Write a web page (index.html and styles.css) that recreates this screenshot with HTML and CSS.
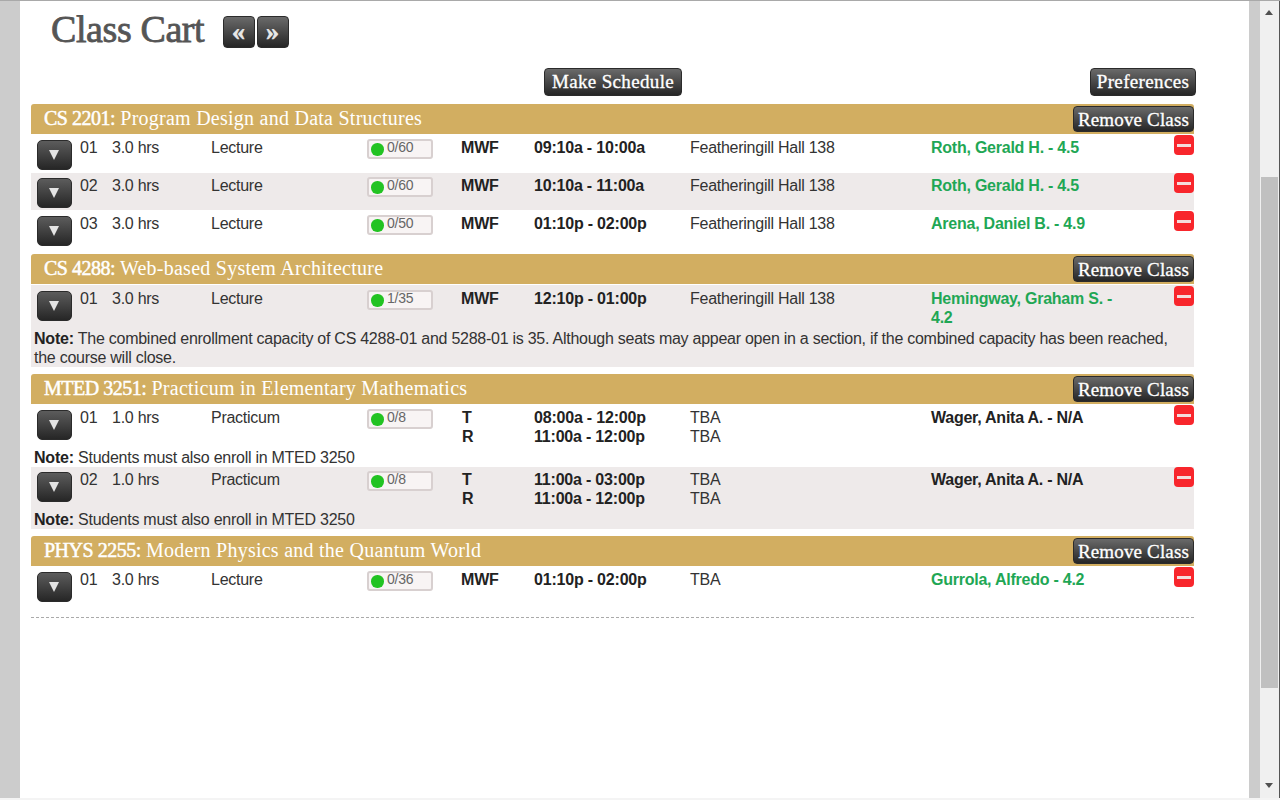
FILE: index.html
```html
<!DOCTYPE html>
<html lang="en">
	<head>
		<meta charset="UTF-8" />
		<title>Class Cart</title>
		<link rel="stylesheet" href="styles.css">
	</head>
	<body>
		<div class="page">
			<div class="gutter"></div>
			<main class="content">
				<div class="title-row">
					<h1>Class Cart</h1>
					<div class="pager">
						<button class="dark-btn pager-btn">«</button>
						<button class="dark-btn pager-btn">»</button>
					</div>
				</div>

				<div class="toolbar">
					<button class="dark-btn make-btn">Make Schedule</button>
					<button class="dark-btn prefs-btn">Preferences</button>
				</div>

				<!-- CS 2201 -->
				<section class="course">
					<div class="course-head">
						<h2><b>CS 2201:</b> Program Design and Data Structures</h2>
						<button class="dark-btn remove-btn">Remove Class</button>
					</div>
					<div class="row">
						<button class="dark-btn toggle"><span class="tri"></span></button>
						<div>01</div>
						<div>3.0 hrs</div>
						<div>Lecture</div>
						<div class="seats"><i></i>0/60</div>
						<div class="strong">MWF</div>
						<div class="strong">09:10a - 10:00a</div>
						<div>Featheringill Hall 138</div>
						<div class="prof rated">Roth, Gerald H. - 4.5</div>
						<button class="minus"><span></span></button>
					</div>
					<div class="row alt tight first-gap">
						<button class="dark-btn toggle"><span class="tri"></span></button>
						<div>02</div>
						<div>3.0 hrs</div>
						<div>Lecture</div>
						<div class="seats"><i></i>0/60</div>
						<div class="strong">MWF</div>
						<div class="strong">10:10a - 11:00a</div>
						<div>Featheringill Hall 138</div>
						<div class="prof rated">Roth, Gerald H. - 4.5</div>
						<button class="minus"><span></span></button>
					</div>
					<div class="row">
						<button class="dark-btn toggle"><span class="tri"></span></button>
						<div>03</div>
						<div>3.0 hrs</div>
						<div>Lecture</div>
						<div class="seats"><i></i>0/50</div>
						<div class="strong">MWF</div>
						<div class="strong">01:10p - 02:00p</div>
						<div>Featheringill Hall 138</div>
						<div class="prof rated">Arena, Daniel B. - 4.9</div>
						<button class="minus"><span></span></button>
					</div>
				</section>

				<!-- CS 4288 -->
				<section class="course">
					<div class="course-head">
						<h2><b>CS 4288:</b> Web-based System Architecture</h2>
						<button class="dark-btn remove-btn">Remove Class</button>
					</div>
					<div class="row alt first-gap">
						<button class="dark-btn toggle"><span class="tri"></span></button>
						<div>01</div>
						<div>3.0 hrs</div>
						<div>Lecture</div>
						<div class="seats"><i></i>1/35</div>
						<div class="strong">MWF</div>
						<div class="strong">12:10p - 01:00p</div>
						<div>Featheringill Hall 138</div>
						<div class="prof rated">Hemingway, Graham S. - 4.2</div>
						<button class="minus"><span></span></button>
						<p class="note"><b>Note:</b> The combined enrollment capacity of CS 4288-01 and 5288-01 is 35. Although seats may appear open in a section, if the combined capacity has been reached, the course will close.</p>
					</div>
				</section>

				<!-- MTED 3251 -->
				<section class="course">
					<div class="course-head">
						<h2><b>MTED 3251:</b> Practicum in Elementary Mathematics</h2>
						<button class="dark-btn remove-btn">Remove Class</button>
					</div>
					<div class="row">
						<button class="dark-btn toggle"><span class="tri"></span></button>
						<div>01</div>
						<div>1.0 hrs</div>
						<div>Practicum</div>
						<div class="seats"><i></i>0/8</div>
						<div class="strong days">T<br>R</div>
						<div class="strong">08:00a - 12:00p<br>11:00a - 12:00p</div>
						<div>TBA<br>TBA</div>
						<div class="prof">Wager, Anita A. - N/A</div>
						<button class="minus"><span></span></button>
						<p class="note"><b>Note:</b> Students must also enroll in MTED 3250</p>
					</div>
					<div class="row alt tight">
						<button class="dark-btn toggle"><span class="tri"></span></button>
						<div>02</div>
						<div>1.0 hrs</div>
						<div>Practicum</div>
						<div class="seats"><i></i>0/8</div>
						<div class="strong days">T<br>R</div>
						<div class="strong">11:00a - 03:00p<br>11:00a - 12:00p</div>
						<div>TBA<br>TBA</div>
						<div class="prof">Wager, Anita A. - N/A</div>
						<button class="minus"><span></span></button>
						<p class="note"><b>Note:</b> Students must also enroll in MTED 3250</p>
					</div>
				</section>

				<!-- PHYS 2255 -->
				<section class="course">
					<div class="course-head">
						<h2><b>PHYS 2255:</b> Modern Physics and the Quantum World</h2>
						<button class="dark-btn remove-btn">Remove Class</button>
					</div>
					<div class="row">
						<button class="dark-btn toggle"><span class="tri"></span></button>
						<div>01</div>
						<div>3.0 hrs</div>
						<div>Lecture</div>
						<div class="seats"><i></i>0/36</div>
						<div class="strong">MWF</div>
						<div class="strong">01:10p - 02:00p</div>
						<div>TBA</div>
						<div class="prof rated">Gurrola, Alfredo - 4.2</div>
						<button class="minus"><span></span></button>
					</div>
				</section>

				<hr class="end-rule">
			</main>
			<div class="gutter right"></div>
			<div class="scrollbar">
				<span class="arrow up"></span>
				<div class="thumb"></div>
				<span class="arrow down"></span>
			</div>
		</div>
	</body>
</html>
```

FILE: styles.css
```css
body {
	margin: 0;
	padding: 0;
	height: 100vh;
	overflow: hidden;
	background: #f4f4f4;
	color: #333;
	font-family: "Liberation Sans", Arial, sans-serif;
	font-size: 16px;
	line-height: 19px;
	letter-spacing: -0.26px;
}

.page {
	display: flex;
	height: 798px;
	border-top: 1px solid #a9a9a9;
	box-sizing: border-box;
}

.gutter {
	width: 20px;
	flex: none;
	background: #ccc;
}

.gutter.right {
	width: 11px;
}

.content {
	flex: none;
	width: 1229px;
	box-sizing: border-box;
	padding-left: 11px;
	background: #fff;
}

/* title */
.title-row {
	display: flex;
	align-items: flex-start;
	height: 67px;
	padding-left: 20px;
}

h1 {
	margin: 6px 0 0;
	width: 171.5px;
	font-family: "Liberation Serif", "Times New Roman", serif;
	font-size: 38px;
	line-height: 44px;
	font-weight: normal;
	color: #555;
	letter-spacing: -0.4px;
	-webkit-text-stroke: 0.8px #555;
}

.pager {
	display: flex;
	gap: 2px;
	padding-top: 15px;
}

.dark-btn {
	margin: 0;
	padding: 0;
	border: 1px solid #2b2b2b;
	border-radius: 4px;
	background: linear-gradient(#6a6a6a, #262626);
	color: #fff;
	font-family: "Liberation Serif", "Times New Roman", serif;
	font-weight: normal;
	box-sizing: border-box;
}

.pager-btn {
	width: 32px;
	height: 32px;
	font-size: 26px;
	line-height: 28px;
	font-weight: bold;
	color: #e8e8e8;
	-webkit-text-stroke: 0.6px #e8e8e8;
}

/* top buttons */
.toolbar {
	display: grid;
	grid-template-columns: 1fr auto 1fr;
	width: 1164px;
	height: 36px;
}

.make-btn {
	grid-column: 2;
	width: 138px;
	height: 28px;
	font-size: 19px;
	letter-spacing: 0.35px;
	-webkit-text-stroke: 0.3px #fff;
}

.prefs-btn {
	justify-self: end;
	width: 106px;
	height: 28px;
	margin-right: -1px;
	font-size: 19px;
	letter-spacing: 0.35px;
	-webkit-text-stroke: 0.3px #fff;
}

/* course blocks */
.course {
	width: 1163px;
	margin-bottom: 7px;
}

.course:nth-of-type(1) {
	margin-bottom: 6px;
}

.course-head {
	display: flex;
	align-items: center;
	justify-content: space-between;
	height: 30px;
	box-sizing: border-box;
	padding-left: 13px;
	background: #d2ae61;
	border-radius: 3px 3px 0 0;
}

h2 {
	margin: -2px 0 0;
	font-family: "Liberation Serif", "Times New Roman", serif;
	font-size: 20px;
	line-height: 26px;
	font-weight: normal;
	color: #fff;
	letter-spacing: 0.25px;
}

h2 b {
	font-weight: normal;
	letter-spacing: -0.5px;
	-webkit-text-stroke: 0.5px #fff;
}

.remove-btn {
	width: 121px;
	height: 26px;
	padding-top: 1px;
	font-size: 19px;
	line-height: 24px;
	letter-spacing: 0.15px;
	-webkit-text-stroke: 0.3px #fff;
}

/* section rows */
.row {
	display: grid;
	grid-template-columns: 49px 32px 99px 156px 94px 73px 156px 241px 243px 20px;
	min-height: 38px;
	padding-top: 4px;
	box-sizing: border-box;
	align-items: start;
}

.row.alt {
	background: #eeeaea;
}

.row.tight {
	min-height: 37px;
	padding-top: 3px;
}

.row.first-gap {
	margin-top: 1px;
}

.note {
	grid-column: 1 / -1;
	margin: 0;
	padding: 2px 12px 0 3px;
}

.note b {
	letter-spacing: -0.2px;
	color: #222;
}

.toggle {
	width: 34.5px;
	height: 30px;
	margin: 2px 0 0 6px;
	border-radius: 5px;
	background: linear-gradient(#5c5c5c, #262626);
	display: flex;
	align-items: center;
	justify-content: center;
}

.tri {
	width: 0;
	height: 0;
	border-left: 5.5px solid transparent;
	border-right: 5.5px solid transparent;
	border-top: 10px solid #e4e4e4;
}

.seats {
	position: relative;
	width: 66px;
	height: 20px;
	margin-top: 1px;
	box-sizing: border-box;
	padding-left: 18px;
	background: #f8f4f4;
	border: 2px solid #d8d0d0;
	border-radius: 3px;
	font-size: 14px;
	line-height: 13px;
	letter-spacing: -0.25px;
	color: #666;
}

.seats i {
	position: absolute;
	left: 2px;
	top: 2px;
	width: 12.5px;
	height: 12.5px;
	border-radius: 50%;
	background: #22c322;
}

.strong {
	font-weight: bold;
	letter-spacing: -0.2px;
	color: #222;
}

.days {
	padding-left: 1px;
}

.prof {
	font-weight: bold;
	letter-spacing: -0.24px;
	color: #222;
	padding-right: 50px;
}

.prof.rated {
	color: #1fa755;
}

.minus {
	width: 20px;
	height: 20px;
	margin: -3px 0 0;
	padding: 0;
	border: none;
	border-radius: 4px;
	background: #f8262c;
	display: flex;
	align-items: center;
	justify-content: center;
}

.minus span {
	width: 14px;
	height: 3px;
	background: #f4dcdc;
}

.end-rule {
	width: 1163px;
	height: 0;
	margin: 13px 0 0;
	border: none;
	border-top: 1px dashed #aaa;
}

/* fake window scrollbar */
.scrollbar {
	position: relative;
	flex: none;
	width: 20px;
	box-sizing: border-box;
	background: #f0f0f0;
	border-right: 1px solid #555;
}

.thumb {
	position: absolute;
	left: 1px;
	top: 176px;
	width: 17px;
	height: 511px;
	background: #c0c0c0;
}

.arrow {
	position: absolute;
	left: 5px;
	width: 0;
	height: 0;
	border-left: 4.5px solid transparent;
	border-right: 4.5px solid transparent;
}

.arrow.up {
	top: 9px;
	border-bottom: 5px solid #505050;
}

.arrow.down {
	bottom: 10px;
	border-top: 5px solid #505050;
}
```
